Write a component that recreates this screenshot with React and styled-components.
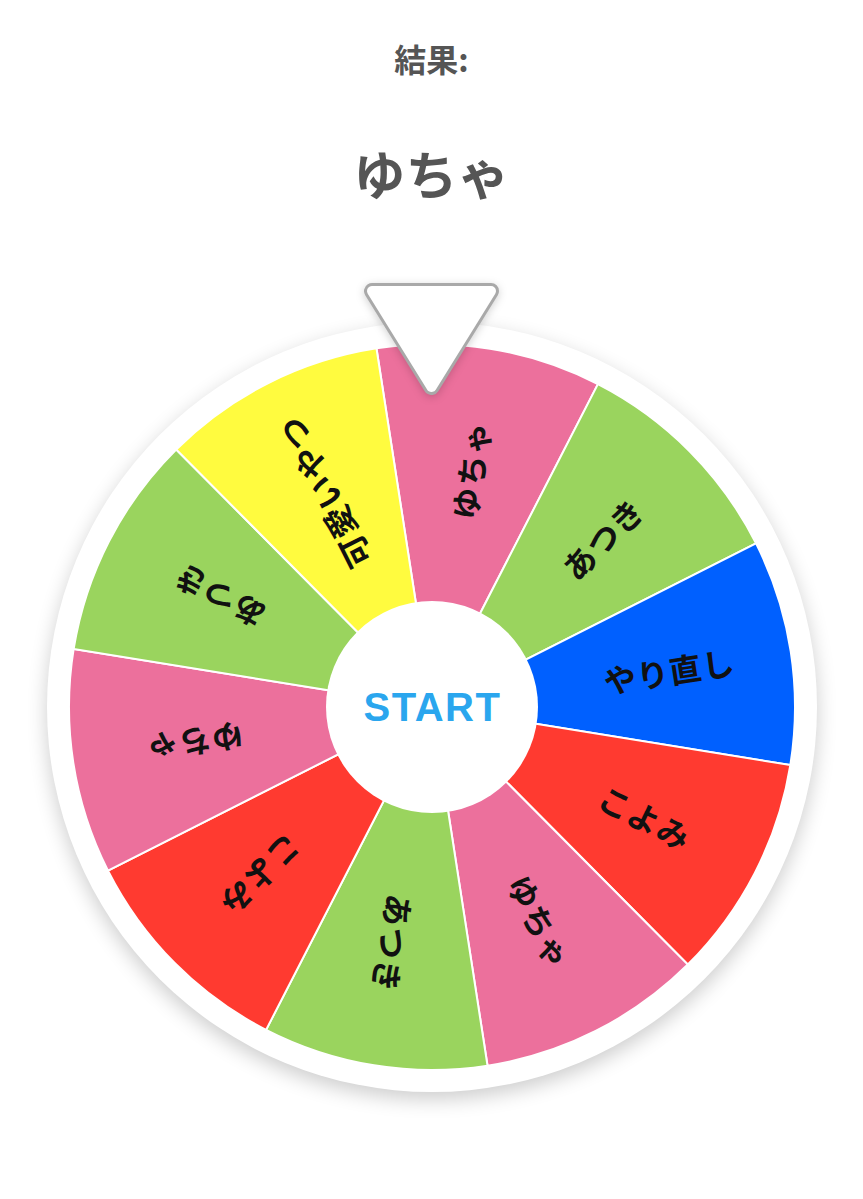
import React from "react";
import styled, { createGlobalStyle } from "styled-components";

const GlobalStyle = createGlobalStyle`
  html,
  body {
    margin: 0;
    background: #ffffff;
  }

  body {
    font-family: "Noto Sans CJK JP", "Noto Sans", sans-serif;
  }
`;

// wheel geometry (px)
const R = 363;
const HUB = 106;
const LABEL_R = 240;
const OFFSET = -8.8;

const SEGMENTS = [
  { label: "ゆちゃ", color: "#ec709c" },
  { label: "あつき", color: "#9ad45e" },
  { label: "やり直し", color: "#0060ff" },
  { label: "こよみ", color: "#ff3a30" },
  { label: "ゆちゃ", color: "#ec709c" },
  { label: "あつき", color: "#9ad45e" },
  { label: "こよみ", color: "#ff3a30" },
  { label: "ゆちゃ", color: "#ec709c" },
  { label: "あつき", color: "#9ad45e" },
  { label: "可愛いやつ", color: "#fffb3f" },
];

function polar(r, deg) {
  const a = (deg * Math.PI) / 180;
  return [R + r * Math.sin(a), R - r * Math.cos(a)];
}

function slicePath(start, end) {
  const [x1, y1] = polar(R, start);
  const [x2, y2] = polar(R, end);
  return `M${R} ${R} L${x1} ${y1} A${R} ${R} 0 0 1 ${x2} ${y2} Z`;
}

function Wheel() {
  const step = 360 / SEGMENTS.length;
  return (
    <Disc width={R * 2} height={R * 2} viewBox={`0 0 ${R * 2} ${R * 2}`}>
      {SEGMENTS.map((s, i) => {
        const start = OFFSET + i * step;
        const mid = start + step / 2;
        const [lx, ly] = polar(LABEL_R, mid);
        return (
          <g key={i}>
            <path d={slicePath(start, start + step)} fill={s.color} stroke="#ffffff" strokeWidth="2" />
            <SliceLabel
              x={lx}
              y={ly}
              textAnchor="middle"
              dominantBaseline="central"
              transform={`rotate(${mid - 90} ${lx} ${ly})`}
            >
              {s.label}
            </SliceLabel>
          </g>
        );
      })}
    </Disc>
  );
}

function Pointer() {
  const pts = "15,11 134,11 74.5,107";
  return (
    <PointerMark width="150" height="124" viewBox="0 0 150 124">
      <polygon points={pts} fill="#a9a9a9" stroke="#a9a9a9" strokeWidth="16" strokeLinejoin="round" />
      <polygon points={pts} fill="#ffffff" stroke="#ffffff" strokeWidth="10" strokeLinejoin="round" />
    </PointerMark>
  );
}

export default function App() {
  return (
    <>
      <GlobalStyle />
      <Page>
        <Heading>結果:</Heading>
        <Result>ゆちゃ</Result>
        <WheelArea>
          <Frame>
            <Wheel />
          </Frame>
          <StartButton type="button">START</StartButton>
          <Pointer />
        </WheelArea>
      </Page>
    </>
  );
}

const Page = styled.main`
  display: flex;
  flex-direction: column;
  align-items: center;
  padding-top: 39px;
  min-height: 1160px;
`;

const Heading = styled.h2`
  margin: 0;
  font-size: 32px;
  line-height: 38px;
  font-weight: 700;
  color: #555555;
`;

const Result = styled.h1`
  margin: 65px 0 0;
  font-size: 52px;
  line-height: 62px;
  font-weight: 700;
  color: #555555;
`;

const WheelArea = styled.div`
  position: relative;
  margin-top: 118px;
  width: 770px;
  height: 770px;
`;

const Frame = styled.div`
  width: 100%;
  height: 100%;
  border-radius: 50%;
  background: #ffffff;
  box-shadow: 0 7px 20px rgba(0, 0, 0, 0.2);
  display: flex;
  align-items: center;
  justify-content: center;
`;

const Disc = styled.svg`
  display: block;
`;

const SliceLabel = styled.text`
  font-family: "Noto Sans CJK JP", sans-serif;
  font-size: 32px;
  font-weight: 700;
  letter-spacing: 1px;
  fill: #111111;
`;

const StartButton = styled.button`
  position: absolute;
  left: 50%;
  top: 50%;
  width: ${HUB * 2}px;
  height: ${HUB * 2}px;
  margin: -${HUB}px 0 0 -${HUB}px;
  border: none;
  border-radius: 50%;
  background: #ffffff;
  color: #2aa6ee;
  font-family: "Liberation Sans", Arial, sans-serif;
  font-size: 40px;
  font-weight: 700;
  letter-spacing: 1.5px;
  padding: 0 0 0 2px;
  cursor: pointer;
`;

const PointerMark = styled.svg`
  position: absolute;
  left: 50%;
  top: -42px;
  margin-left: -75px;
  filter: drop-shadow(0 2px 4px rgba(0, 0, 0, 0.18));
`;
